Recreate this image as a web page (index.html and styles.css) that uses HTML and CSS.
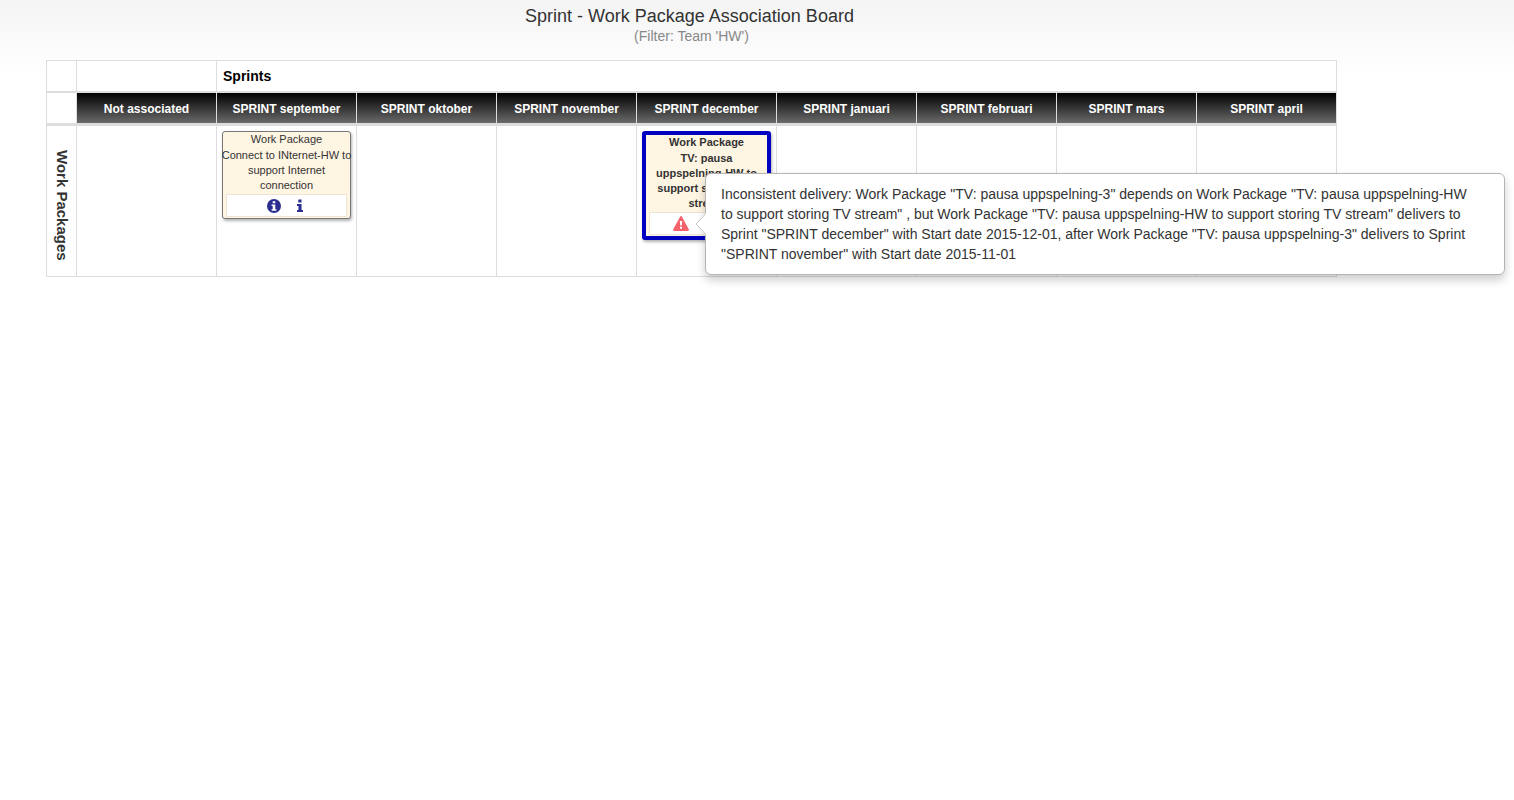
FILE: index.html
```html
<!DOCTYPE html>
<html lang="en">
<head>
<meta charset="utf-8">
<title>Sprint - Work Package Association Board</title>
<link rel="stylesheet" href="styles.css">
</head>
<body>
<main class="page">
  <header class="heading">
    <h1 class="title">Sprint - Work Package Association Board</h1>
    <p class="filter">(Filter: Team 'HW')</p>
  </header>
  <table class="board">
    <colgroup>
      <col class="col-label">
      <col span="9">
    </colgroup>
    <thead>
      <tr class="group-row">
        <td></td>
        <td></td>
        <th colspan="8" scope="colgroup">Sprints</th>
      </tr>
      <tr class="sprint-row">
        <td></td>
        <th scope="col">Not associated</th>
        <th scope="col">SPRINT september</th>
        <th scope="col">SPRINT oktober</th>
        <th scope="col">SPRINT november</th>
        <th scope="col">SPRINT december</th>
        <th scope="col">SPRINT januari</th>
        <th scope="col">SPRINT februari</th>
        <th scope="col">SPRINT mars</th>
        <th scope="col">SPRINT april</th>
      </tr>
    </thead>
    <tbody>
      <tr class="package-row">
        <th class="row-label" scope="row"><span class="vertical">Work Packages</span></th>
        <td></td>
        <td>
          <article class="card">
            <div class="card-type">Work Package</div>
            <div class="card-name card-name-wide">Connect to INternet-HW to support Internet connection</div>
            <div class="card-tools">
              <button class="tool" type="button" aria-label="Details">
                <svg width="14" height="14" viewBox="0 0 14 14"><path fill="#2b2d91" fill-rule="evenodd" d="M7 0a7 7 0 1 1 0 14A7 7 0 0 1 7 0zM5.700 2.200v2h2.600v-2zM4.600 5.400v1.500h1.100v3.300H4.600v1.500h4.800v-1.500H8.300V5.400z"/></svg>
              </button>
              <button class="tool" type="button" aria-label="Information">
                <svg width="14" height="14" viewBox="0 0 14 14"><path fill="#2b2d91" d="M5.300 .5h3.200v2.900h-3.200zM4 5h4.500v6.100h1.500V13H4v-1.900h1.500V6.900H4z"/></svg>
              </button>
            </div>
          </article>
        </td>
        <td></td>
        <td></td>
        <td>
          <article class="card card-selected">
            <div class="card-type">Work Package</div>
            <div class="card-name">TV: pausa uppspelning-HW to support storing TV stream</div>
            <div class="card-tools card-tools-warning">
              <button class="tool" type="button" aria-label="Warning" aria-describedby="delivery-warning">
                <svg width="16" height="15" viewBox="0 0 16 15"><path fill="#f4626b" fill-rule="evenodd" d="M7.200.5Q8 -.4 8.800.5L15.900 13.500Q16 14.800 15 15H1Q0 14.800.1 13.500zM6.800 5l.4 4.500h1.600L9.200 5zM7 10.800v2h2v-2z"/></svg>
              </button>
            </div>
            <div class="popover" id="delivery-warning" role="tooltip">
              <svg class="popover-arrow" width="11" height="22" viewBox="0 0 11 22"><path fill="#fff" d="M11 0L1 11l10 11z"/><path fill="none" stroke="#c4c4c4" d="M10.500 1L1 11l9.500 10"/></svg>
              Inconsistent delivery: Work Package "TV: pausa uppspelning-3" depends on Work Package "TV: pausa uppspelning-HW to support storing TV stream" , but Work Package "TV: pausa uppspelning-HW to support storing TV stream" delivers to Sprint "SPRINT december" with Start date 2015-12-01, after Work Package "TV: pausa uppspelning-3" delivers to Sprint "SPRINT november" with Start date 2015-11-01
            </div>
          </article>
        </td>
        <td></td>
        <td></td>
        <td></td>
        <td></td>
      </tr>
    </tbody>
  </table>
</main>
</body>
</html>
```
FILE: styles.css
```css
* {
  box-sizing: border-box;
}

body {
  margin: 0;
  background: #fff linear-gradient(#f4f4f4, #fff) 0 0 / 100% 76px no-repeat;
  color: #333;
  font: 14px/20px Arial, "Liberation Sans", sans-serif;
}

.page {
  padding: 6px 177px 40px 46px;
}

.heading {
  margin-bottom: 14px;
  text-align: center;
}

.title {
  margin: 0;
  padding-right: 4px;
  font-size: 18px;
  font-weight: normal;
  line-height: 20px;
}

.filter {
  margin: 0;
  color: #888;
}

.board {
  width: 100%;
  table-layout: fixed;
  border-spacing: 0;
  border-right: 1px solid #ddd;
  border-bottom: 1px solid #ddd;
  background: #fff;
}

.board th,
.board td {
  padding: 0;
  border-left: 1px solid #ddd;
}

.col-label {
  width: 30px;
}

.group-row > * {
  height: 31px;
  border-top: 1px solid #ddd;
}

.board .group-row > th {
  padding-left: 6px;
  color: #000;
  text-align: left;
}

.sprint-row > * {
  height: 32px;
  border-top: 2px solid #ddd;
}

.board .sprint-row > th {
  padding-top: 2px;
  background: linear-gradient(#000, #6a6a6a) padding-box;
  color: #fff;
  font-size: 12px;
}

.package-row > * {
  height: 153px;
  border-top: 3px solid #ddd;
  vertical-align: top;
}

.board .package-row > td {
  padding: 5px;
}

.board .row-label {
  padding-top: 8px;
  vertical-align: middle;
}

.vertical {
  display: block;
  margin: 0 auto;
  writing-mode: vertical-rl;
  font-size: 15px;
  line-height: 28px;
  text-align: center;
}

.card {
  position: relative;
  padding-bottom: 1px;
  border: 1px solid #777;
  border-radius: 3px;
  background: #fff5e3;
  box-shadow: 1px 2px 3px rgba(0, 0, 0, 0.3);
  font-size: 11px;
  line-height: 15px;
  text-align: center;
}

.card-type {
  padding-bottom: 1px;
}

.card-name-wide {
  margin: 0 -2px;
}

.card-selected {
  border: 4px solid #0000c0;
  font-weight: bold;
}

.card-tools {
  display: flex;
  justify-content: center;
  align-items: center;
  gap: 12px;
  height: 23px;
  margin: 1px 3px 0;
  border: 1px solid #eee4d5;
  background: #fff;
}

.card-tools-warning {
  justify-content: flex-start;
  padding-left: 23px;
}

.tool {
  display: flex;
  padding: 0;
  border: 0;
  background: none;
}

.popover {
  position: absolute;
  z-index: 1;
  top: 38px;
  left: 59px;
  width: 800px;
  padding: 10px 27px 10px 15px;
  border: 1px solid #b4b4b4;
  border-radius: 6px;
  background: #fff;
  box-shadow: 0 5px 10px rgba(0, 0, 0, 0.2);
  font-size: 14px;
  font-weight: normal;
  line-height: 20px;
  text-align: left;
}

.popover-arrow {
  position: absolute;
  top: 39px;
  left: -11px;
}
```
